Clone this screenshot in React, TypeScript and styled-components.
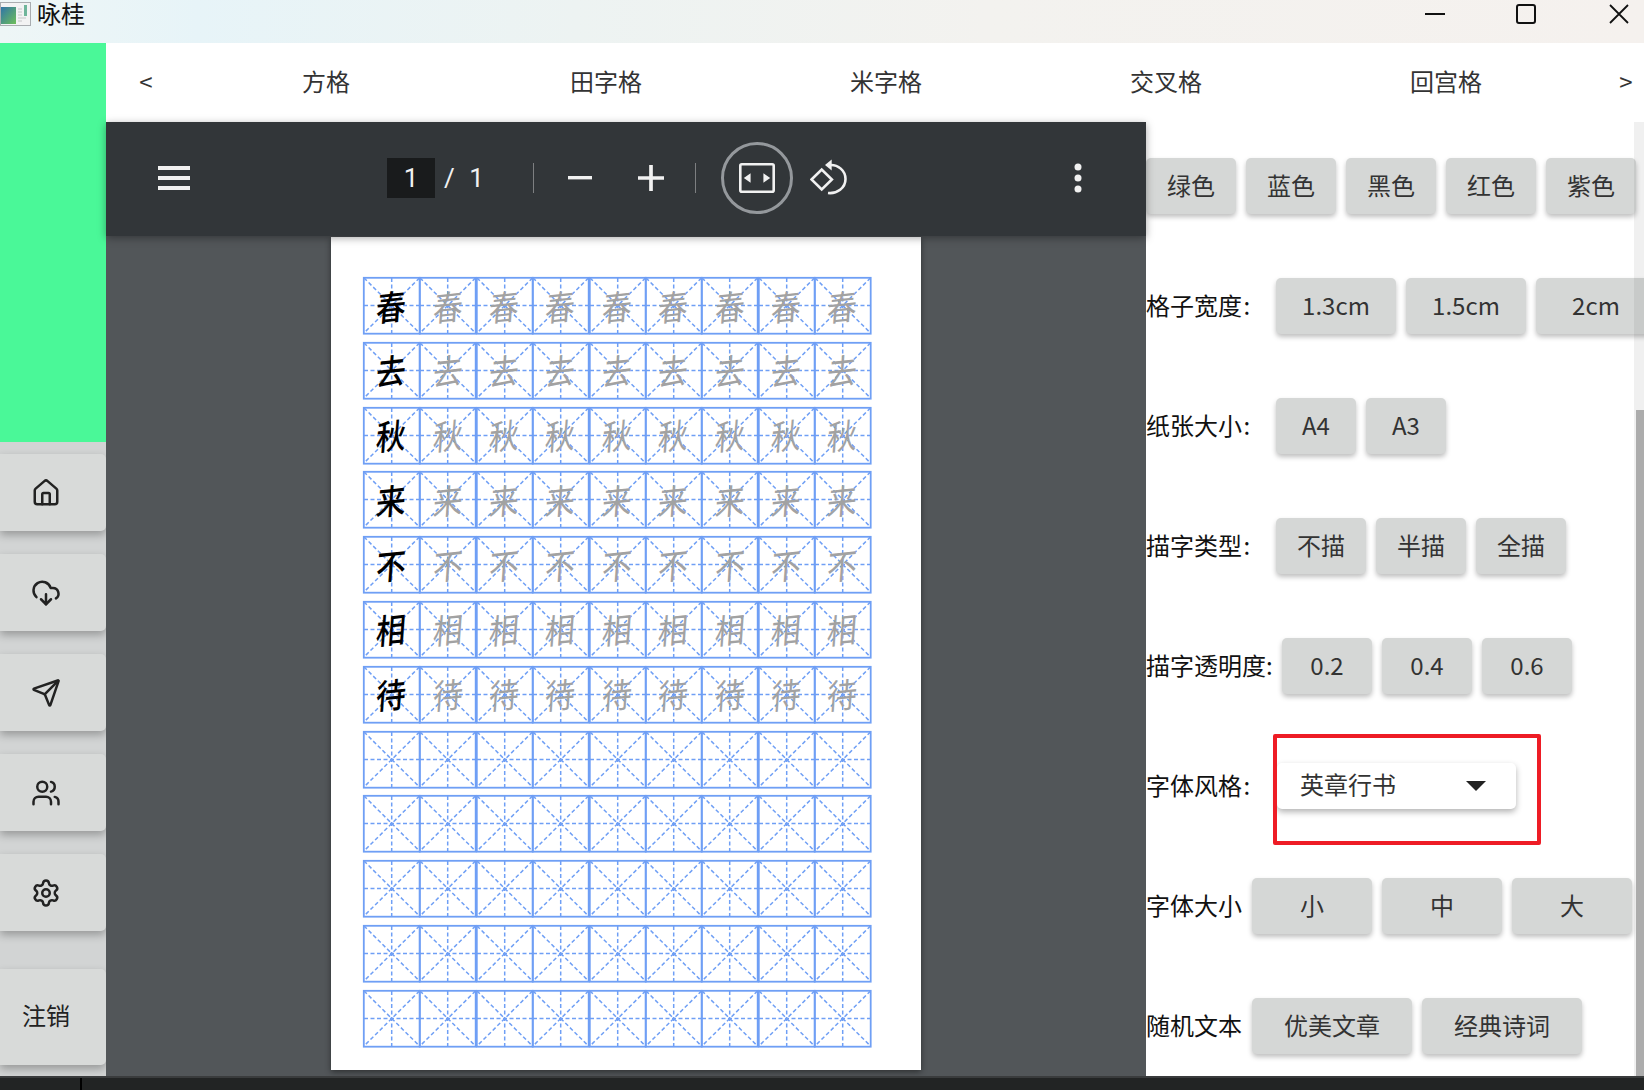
import React from "react";
import styled, { createGlobalStyle } from "styled-components";
import { House, CloudDownload, Send, Users, Settings } from "lucide-react";

const FONT = '"Noto Sans CJK SC", "Noto Sans", sans-serif';

const GlobalStyle = createGlobalStyle`
  html, body {
    margin: 0;
    padding: 0;
    width: 1644px;
    height: 1090px;
    overflow: hidden;
    background: #222;
    font-family: ${FONT};
  }
  * { box-sizing: border-box; }
`;

const Shell = styled.div`
  width: 1644px;
  height: 1090px;
  display: flex;
  flex-direction: column;
  overflow: hidden;
`;

const TitleBar = styled.div`
  height: 43px;
  flex: none;
  display: flex;
  align-items: flex-start;
  background: linear-gradient(90deg, #eef6f6 0%, #e7f4f8 12%, #edf3f2 35%, #f3f2ef 60%, #f5f1ee 100%);
`;

const AppIcon = styled.svg`
  width: 31px;
  height: 26px;
  margin-top: 1px;
  flex: none;
`;

const AppTitle = styled.span`
  font-size: 24px;
  line-height: 26px;
  color: #111;
  margin-left: 6px;
  flex: 1;
`;

const WinButton = styled.svg`
  width: 20px;
  height: 20px;
  margin-top: 4px;
  flex: none;
`;

const CloseButton = styled(WinButton)`
  margin-left: 2px;
`;

const WinControls = styled.div`
  display: flex;
  gap: 71px;
  padding-right: 15px;
`;

const Main = styled.div`
  flex: 1;
  min-height: 0;
  display: flex;
`;

const Sidebar = styled.nav`
  width: 106px;
  flex: none;
  display: flex;
  flex-direction: column;
  background: #d2d4d4;
`;

const GreenBlock = styled.div`
  height: 399px;
  flex: none;
  background: #4af898;
  margin-bottom: 12px;
`;

const SideButton = styled.button<{ $tall?: boolean }>`
  width: 106px;
  height: ${(p) => (p.$tall ? "96px" : "77px")};
  margin-bottom: 23px;
  margin-top: ${(p) => (p.$tall ? "15px" : "0")};
  flex: none;
  border: none;
  padding: 0 14px ${(p) => (p.$tall ? "6px" : "0")} 0;
  border-radius: 0 5px 5px 0;
  background: #d8dad9;
  box-shadow: 0 4px 8px rgba(0, 0, 0, 0.28);
  display: flex;
  align-items: center;
  justify-content: center;
  color: #222;
  font-family: ${FONT};
  font-size: 24px;
  svg { display: block; }
`;

const Content = styled.div`
  flex: 1;
  min-width: 0;
  display: flex;
  flex-direction: column;
`;

const Tabs = styled.div`
  height: 79px;
  flex: none;
  background: #fff;
  display: flex;
  overflow: hidden;
`;

const Tab = styled.div<{ $arrow?: boolean }>`
  width: ${(p) => (p.$arrow ? "80px" : "280px")};
  flex: none;
  display: flex;
  align-items: center;
  justify-content: center;
  padding-bottom: 4px;
  font-size: 24px;
  color: #333;
`;

const Work = styled.div`
  flex: 1;
  min-height: 0;
  display: flex;
`;

const Viewer = styled.section`
  width: 1040px;
  flex: none;
  display: flex;
  flex-direction: column;
  align-items: center;
  background: #525659;
`;

const PdfToolbar = styled.div`
  width: 100%;
  height: 114px;
  flex: none;
  padding-bottom: 3px;
  background: #323639;
  display: flex;
  align-items: center;
  position: relative;
  z-index: 1;
  box-shadow: 0 2px 8px rgba(0, 0, 0, 0.35);
  color: #f1f1f1;
`;

const Burger = styled.div`
  width: 32px;
  height: 24px;
  margin-left: 52px;
  flex: none;
  display: flex;
  flex-direction: column;
  justify-content: space-between;
  span {
    display: block;
    height: 4px;
    background: #f1f1f1;
  }
`;

const PageInput = styled.div`
  width: 48px;
  height: 40px;
  margin-left: 197px;
  flex: none;
  background: #191b1c;
  display: flex;
  align-items: center;
  justify-content: center;
  font-family: Roboto, sans-serif;
  font-size: 26px;
`;

const PageCount = styled.span`
  font-family: Roboto, sans-serif;
  font-size: 26px;
  margin-left: 9px;
  white-space: pre;
  word-spacing: 8px;
  width: 89px;
  flex: none;
`;

const Divider = styled.div`
  width: 1px;
  height: 30px;
  flex: none;
  background: #7d7f81;
`;

const ToolIcon = styled.svg<{ $w: number; $h: number; $ml: number }>`
  width: ${(p) => p.$w}px;
  height: ${(p) => p.$h}px;
  margin-left: ${(p) => p.$ml}px;
  flex: none;
`;

const FitRing = styled.div`
  width: 72px;
  height: 72px;
  margin-left: 25px;
  flex: none;
  border: 3px solid #94989c;
  border-radius: 50%;
  display: flex;
  align-items: center;
  justify-content: center;
`;

const Sheet = styled.div`
  width: 590px;
  height: 833px;
  margin-top: 1px;
  flex: none;
  background: #fff;
  box-shadow: 0 2px 6px rgba(0, 0, 0, 0.45);
  padding: 40px 0 0 32px;
  display: flex;
  flex-direction: column;
  gap: 7.8px;
`;

const GridRow = styled.div`
  display: flex;
  height: 57px;
  flex: none;
`;

const Cell = styled.div`
  position: relative;
  width: 56.4px;
  height: 57px;
  flex: none;
  display: flex;
  align-items: center;
  justify-content: center;
`;

const CellLines = styled.svg`
  position: absolute;
  left: 0;
  top: 0;
  width: 57.4px;
  height: 57px;
  overflow: visible;
`;

const Glyph = styled.span<{ $trace: boolean }>`
  position: relative;
  font-size: 34px;
  line-height: 1;
  font-weight: ${(p) => (p.$trace ? 400 : 500)};
  color: ${(p) => (p.$trace ? "#a2a2a2" : "#000")};
  transform: rotate(-6deg) skewX(-10deg) scaleX(0.88);
`;

const Panel = styled.aside`
  flex: 1;
  min-width: 0;
  position: relative;
  overflow: hidden;
  background: #fff;
  padding-top: 36px;
  display: flex;
  flex-direction: column;
  gap: 64px;
`;

const Row = styled.div`
  height: 56px;
  flex: none;
  display: flex;
  align-items: center;
  gap: 10px;
`;

const Label = styled.span<{ $w: number }>`
  width: ${(p) => p.$w}px;
  margin-right: -10px;
  margin-bottom: 4px;
  flex: none;
  font-size: 24px;
  color: #111;
  white-space: nowrap;
`;

const Btn = styled.button<{ $w: number }>`
  width: ${(p) => p.$w}px;
  height: 56px;
  flex: none;
  border: none;
  padding: 0 0 4px;
  border-radius: 5px;
  background: #d5d7d6;
  box-shadow: 0 3px 5px rgba(0, 0, 0, 0.25);
  color: #333;
  font-family: ${FONT};
  font-size: 24px;
`;

const SelectBox = styled.div`
  width: 239px;
  height: 46px;
  flex: none;
  border-radius: 5px;
  background: #fff;
  box-shadow: 0 3px 6px rgba(0, 0, 0, 0.3);
  display: flex;
  align-items: center;
  justify-content: space-between;
  padding: 0 30px 5px 23px;
  font-size: 24px;
  color: #333;
`;

const Caret = styled.i`
  width: 0;
  height: 0;
  margin-top: 5px;
  border-left: 10px solid transparent;
  border-right: 10px solid transparent;
  border-top: 10px solid #222;
`;

// the red frame is an annotation drawn over the dropdown
const RedFrame = styled.div`
  position: absolute;
  left: 127px;
  top: 612px;
  width: 268px;
  height: 111px;
  border: 4px solid #ee1c25;
  border-radius: 2px;
`;

const ScrollTrack = styled.div`
  position: absolute;
  right: 0;
  top: 0;
  bottom: 0;
  width: 10px;
  background: rgba(0, 0, 0, 0.06);
`;

const ScrollThumb = styled.div`
  position: absolute;
  left: 2px;
  right: 0;
  top: 288px;
  bottom: 0;
  background: #acacac;
`;

const BottomBar = styled.div`
  height: 14px;
  flex: none;
  background: #222424;
  border-top: 2px solid #3a3c3d;
  padding-left: 80px;
  position: relative;
  z-index: 2;
  span {
    display: block;
    width: 2px;
    height: 100%;
    background: #000;
  }
`;

const TABS = ["方格", "田字格", "米字格", "交叉格", "回宫格"];
const POEM = ["春", "去", "秋", "来", "不", "相", "待"];
const ROWS = Array.from({ length: 12 }, (_, i) => POEM[i] || "");
const CELLS = Array.from({ length: 9 }, (_, i) => i);

const LINE = "#6f9ff5";

const MiGrid = () => (
  <CellLines viewBox="0 0 57.4 57">
    <g stroke={LINE} fill="none">
      <rect x="0.8" y="0.8" width="55.9" height="55.9" strokeWidth="1.8" />
      <g strokeWidth="1.5" strokeDasharray="4 2.5">
        <line x1="1" y1="1" x2="56.5" y2="56" />
        <line x1="56.5" y1="1" x2="1" y2="56" />
        <line x1="28.7" y1="1" x2="28.7" y2="56" />
        <line x1="1" y1="28.5" x2="56.5" y2="28.5" />
      </g>
    </g>
  </CellLines>
);

const App = () => {
  return (
    <Shell>
      <GlobalStyle />
      <TitleBar>
        <AppIcon viewBox="0 0 31 26">
          <defs>
            <linearGradient id="appIconFill" x1="0" y1="0" x2="1" y2="1">
              <stop offset="0" stopColor="#2f74a8" />
              <stop offset="1" stopColor="#6fbf5a" />
            </linearGradient>
          </defs>
          <rect x="0.5" y="1.5" width="30" height="23" fill="#f2f3f3" stroke="#a9adb0" />
          <rect x="1" y="6" width="15" height="17" fill="url(#appIconFill)" />
          <rect x="24" y="4" width="3" height="11" fill="#6fb59a" />
          <path d="M18 8h4M18 11h4M18 14h4M18 17h8M18 20h4" stroke="#c4c6c8" strokeWidth="1.2" />
        </AppIcon>
        <AppTitle>咏桂</AppTitle>
        <WinControls>
          <WinButton viewBox="0 0 20 20">
            <path d="M0 10h20" stroke="#111" strokeWidth="2" />
          </WinButton>
          <WinButton viewBox="0 0 20 20">
            <rect x="1" y="1" width="18" height="18" rx="2" fill="none" stroke="#111" strokeWidth="2" />
          </WinButton>
          <CloseButton viewBox="0 0 20 20">
            <path d="M1 1l18 18M19 1L1 19" stroke="#111" strokeWidth="1.8" />
          </CloseButton>
        </WinControls>
      </TitleBar>

      <Main>
        <Sidebar>
          <GreenBlock />
          <SideButton><House size={30} strokeWidth={2} /></SideButton>
          <SideButton><CloudDownload size={30} strokeWidth={2} /></SideButton>
          <SideButton><Send size={30} strokeWidth={2} /></SideButton>
          <SideButton><Users size={30} strokeWidth={2} /></SideButton>
          <SideButton><Settings size={30} strokeWidth={2} /></SideButton>
          <SideButton $tall>注销</SideButton>
        </Sidebar>

        <Content>
          <Tabs>
            <Tab $arrow>&lt;</Tab>
            {TABS.map((t) => (
              <Tab key={t}>{t}</Tab>
            ))}
            <Tab $arrow>&gt;</Tab>
          </Tabs>

          <Work>
            <Viewer>
              <PdfToolbar>
                <Burger><span /><span /><span /></Burger>
                <PageInput>1</PageInput>
                <PageCount>/ 1</PageCount>
                <Divider />
                <ToolIcon viewBox="0 0 24 4" $w={24} $h={4} $ml={34}>
                  <rect width="24" height="3.4" fill="#f1f1f1" />
                </ToolIcon>
                <ToolIcon viewBox="0 0 24 24" $w={26} $h={26} $ml={46}>
                  <path d="M12 0v24M0 12h24" stroke="#f1f1f1" strokeWidth="3.4" />
                </ToolIcon>
                <ToolIcon viewBox="0 0 1 1" $w={0} $h={0} $ml={31} />
                <Divider />
                <FitRing>
                  <svg width="36" height="30" viewBox="0 0 36 30">
                    <rect x="1.3" y="1.3" width="33.4" height="27.4" rx="1.5" fill="none" stroke="#f1f1f1" strokeWidth="2.6" />
                    <path d="M4.8 15l6.8-4.8v9.6zM31.2 15l-6.8-4.8v9.6z" fill="#f1f1f1" />
                  </svg>
                </FitRing>
                <ToolIcon viewBox="0 0 37 37" $w={37} $h={37} $ml={17}>
                  <path d="M1.5 20.5 11.7 10.5l10.2 10-10.2 10z" fill="none" stroke="#f1f1f1" strokeWidth="2.6" />
                  <path d="M20 6c8-.5 15.5 5.5 15.5 14 0 9-8.500 15-17.500 14" fill="none" stroke="#f1f1f1" strokeWidth="2.6" />
                  <path d="M21.700 .5v11L15 6z" fill="#f1f1f1" />
                </ToolIcon>
                <ToolIcon viewBox="0 0 8 30" $w={8} $h={30} $ml={227}>
                  <circle cx="4" cy="4" r="3.500" fill="#f1f1f1" />
                  <circle cx="4" cy="15" r="3.500" fill="#f1f1f1" />
                  <circle cx="4" cy="26" r="3.500" fill="#f1f1f1" />
                </ToolIcon>
              </PdfToolbar>
              <Sheet>
                {ROWS.map((ch, r) => (
                  <GridRow key={r}>
                    {CELLS.map((c) => (
                      <Cell key={c}>
                        <MiGrid />
                        {ch && <Glyph $trace={c > 0}>{ch}</Glyph>}
                      </Cell>
                    ))}
                  </GridRow>
                ))}
              </Sheet>
            </Viewer>

            <Panel>
              <Row>
                <Btn $w={90}>绿色</Btn>
                <Btn $w={90}>蓝色</Btn>
                <Btn $w={90}>黑色</Btn>
                <Btn $w={90}>红色</Btn>
                <Btn $w={90}>紫色</Btn>
              </Row>
              <Row>
                <Label $w={130}>格子宽度&#8202;:</Label>
                <Btn $w={120}>1.3cm</Btn>
                <Btn $w={120}>1.5cm</Btn>
                <Btn $w={120}>2cm</Btn>
              </Row>
              <Row>
                <Label $w={130}>纸张大小&#8202;:</Label>
                <Btn $w={80}>A4</Btn>
                <Btn $w={80}>A3</Btn>
              </Row>
              <Row>
                <Label $w={130}>描字类型&#8202;:</Label>
                <Btn $w={90}>不描</Btn>
                <Btn $w={90}>半描</Btn>
                <Btn $w={90}>全描</Btn>
              </Row>
              <Row>
                <Label $w={136}>描字透明度:</Label>
                <Btn $w={90}>0.2</Btn>
                <Btn $w={90}>0.4</Btn>
                <Btn $w={90}>0.6</Btn>
              </Row>
              <Row>
                <Label $w={131}>字体风格&#8202;:</Label>
                <SelectBox>
                  英章行书
                  <Caret />
                </SelectBox>
              </Row>
              <Row>
                <Label $w={106}>字体大小</Label>
                <Btn $w={120}>小</Btn>
                <Btn $w={120}>中</Btn>
                <Btn $w={120}>大</Btn>
              </Row>
              <Row>
                <Label $w={106}>随机文本</Label>
                <Btn $w={160}>优美文章</Btn>
                <Btn $w={160}>经典诗词</Btn>
              </Row>
              <RedFrame />
              <ScrollTrack>
                <ScrollThumb />
              </ScrollTrack>
            </Panel>
          </Work>
        </Content>
      </Main>
      <BottomBar><span /></BottomBar>
    </Shell>
  );
};

export default App;
